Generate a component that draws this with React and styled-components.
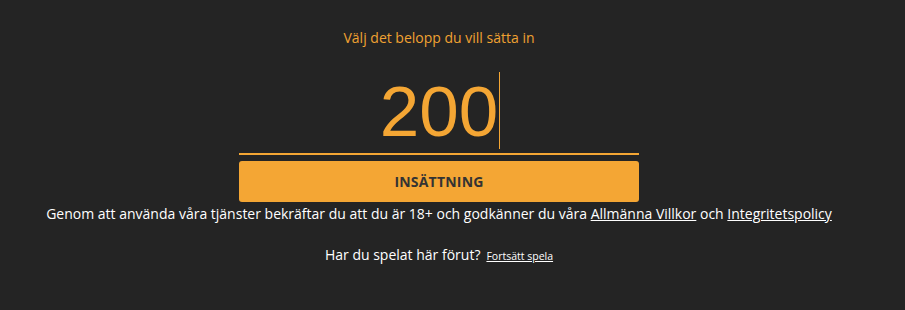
import styled, { createGlobalStyle } from "styled-components";

const GlobalStyle = createGlobalStyle`
  html, body {
    margin: 0;
    padding: 0;
    background: #242424;
  }
  body {
    font-family: "Open Sans", "Liberation Sans", sans-serif;
    color: #fff;
  }
`;

const Page = styled.div`
  width: 878px;
  height: 310px;
  display: flex;
  flex-direction: column;
  align-items: center;
  padding-top: 28px;
  box-sizing: border-box;
`;

const Label = styled.div`
  font-size: 14px;
  line-height: 19px;
  color: #f0a232;
`;

const AmountField = styled.div`
  width: 400px;
  margin-top: 25px;
  height: 81px;
  border-bottom: 2px solid #f4a634;
  display: flex;
  justify-content: center;
  align-items: flex-start;
`;

const Amount = styled.span`
  position: relative;
  font-family: "Liberation Sans", Arial, sans-serif;
  font-size: 71px;
  line-height: 77px;
  color: #f4a634;
  margin-top: 1px;
  &::after {
    content: "";
    position: absolute;
    right: -2px;
    top: -1px;
    width: 1px;
    height: 77px;
    background: #f4a634;
  }
`;

const Submit = styled.button`
  width: 400px;
  height: 41px;
  margin-top: 6px;
  border: none;
  border-radius: 3px;
  background: #f4a634;
  color: #333;
  font-family: "Open Sans", sans-serif;
  font-weight: 700;
  font-size: 14px;
  letter-spacing: 0.2px;
  cursor: pointer;
`;

const Terms = styled.p`
  margin: 2px 0 0;
  font-size: 14px;
  line-height: 19px;
  color: #fff;
  white-space: nowrap;
`;

const Link = styled.a`
  color: #fff;
  text-decoration: underline;
  font-size: ${p => p.$small ? "10.5px" : "inherit"};
`;

const Returning = styled.p`
  margin: 22px 0 0;
  font-size: 14px;
  line-height: 19px;
  color: #fff;
  display: flex;
  align-items: baseline;
  gap: 6px;
`;

export default function App() {
  return (
    <>
      <GlobalStyle />
      <Page>
        <Label>Välj det belopp du vill sätta in</Label>
        <AmountField>
          <Amount>200</Amount>
        </AmountField>
        <Submit>INSÄTTNING</Submit>
        <Terms>
          Genom att använda våra tjänster bekräftar du att du är 18+ och godkänner du våra{" "}
          <Link href="#">Allmänna Villkor</Link> och <Link href="#">Integritetspolicy</Link>
        </Terms>
        <Returning>
          Har du spelat här förut? <Link $small href="#">Fortsätt spela</Link>
        </Returning>
      </Page>
    </>
  );
}
